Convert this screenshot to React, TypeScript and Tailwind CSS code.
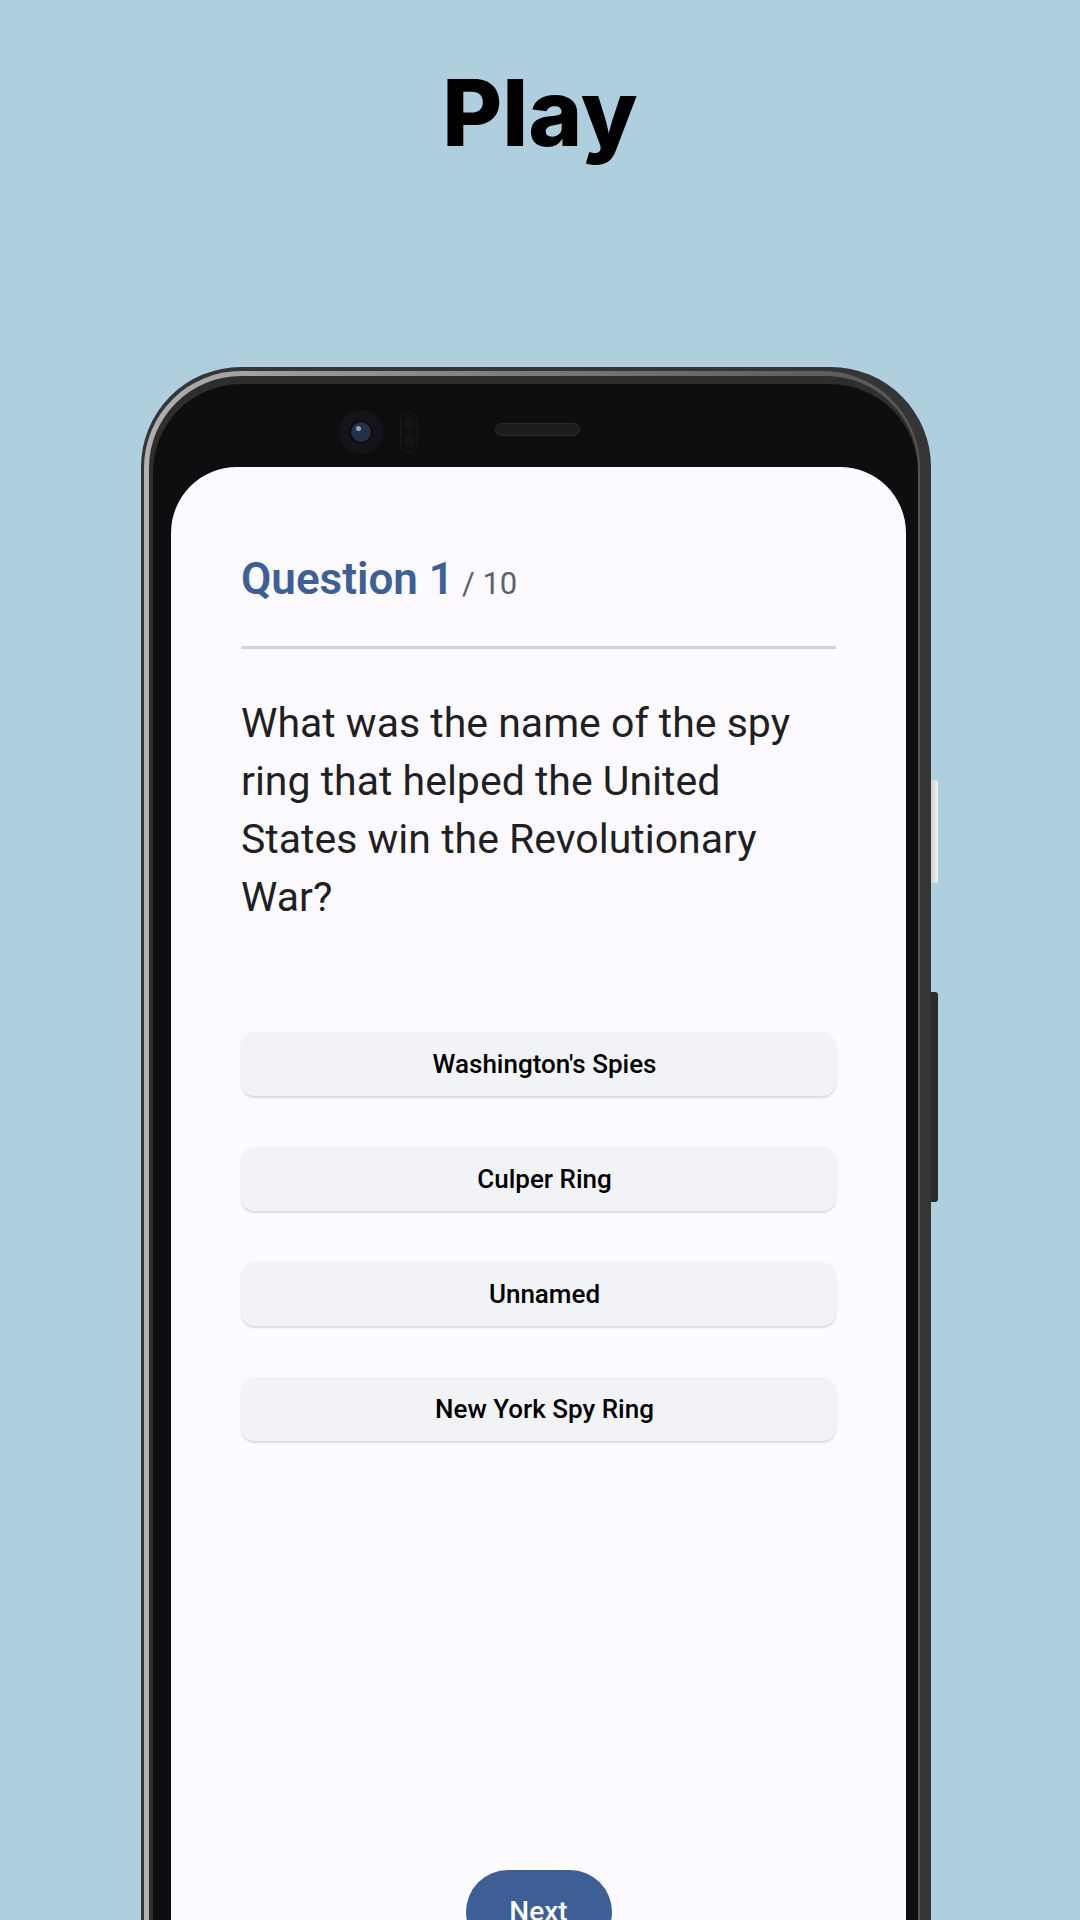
const answers = ["Washington's Spies", 'Culper Ring', 'Unnamed', 'New York Spy Ring'];

const PhoneTopBar = () => {
  return (
    <div className="flex h-[83px] items-start">
      <div className="ml-[168px] mt-[26px] flex h-[44px] w-[44px] items-center justify-center rounded-full bg-[#151518]">
        <div className="relative h-[20px] w-[20px] rounded-full bg-[#23304a] ring-2 ring-[#0c0c10]">
          <div className="absolute left-[5px] top-[4px] h-[5px] w-[5px] rounded-full bg-[#9aa3b5]" />
        </div>
      </div>
      <div className="ml-[17px] mt-[28px] flex h-[41px] w-[18px] flex-col items-center justify-around rounded-full border border-[#1c1c1f] bg-[#0f0f12] py-[2px]">
        <div className="h-[11px] w-[11px] rounded-full bg-[#151518]" />
        <div className="h-[11px] w-[11px] rounded-full bg-[#151518]" />
      </div>
      <div className="ml-[77px] mt-[39px] h-[13px] w-[85px] rounded-full border border-[#2c2c30] bg-[#1d1d20]" />
    </div>
  );
};

const QuizScreen = () => {
  return (
    <div className="min-h-[1500px] rounded-t-[66px] bg-[#fcfaff] px-[70px] pt-[90px] font-['Roboto',sans-serif]">
      <div className="flex items-baseline leading-none">
        <span className="text-[44px] font-semibold text-[#3d5f96]">Question 1</span>
        <span className="ml-[8px] text-[31px] text-[#5c6070]">/ 10</span>
      </div>
      <div className="mt-[45px] h-[3px] w-full bg-[#d2d2d9]" />

      <p className="mt-[45px] text-[41px] leading-[58px] text-[#1f1f24]">
        What was the name of the spy ring that helped the United States win the Revolutionary War?
      </p>

      <div className="mt-[106px] flex flex-col gap-[51px]">
        {answers.map((a) => (
          <button
            key={a}
            className="flex h-[64px] w-full items-center justify-center rounded-[14px] bg-[#f2f3f7] pl-[12px] text-[26px] font-medium text-black shadow-[0_2px_2px_rgba(0,0,0,0.13)]"
          >
            {a}
          </button>
        ))}
      </div>

      <div className="mt-[429px] flex justify-center">
        <button className="flex h-[84px] w-[146px] items-center justify-center rounded-full bg-[#3d5f96] text-[28px] font-medium text-white">
          Next
        </button>
      </div>
    </div>
  );
};

const App = () => {
  return (
    <div className="flex h-[1920px] w-[1080px] flex-col overflow-hidden bg-[#afcfdf]">
      <h1 className="pt-[67px] text-center font-['Inter',sans-serif] text-[92px] font-extrabold leading-none text-black">
        Play
      </h1>

      <div className="relative ml-[141px] mt-[208px] w-[790px]">
        {/* side buttons */}
        <div className="absolute left-[790px] top-[413px] h-[103px] w-[7px] rounded-r-[3px] bg-gradient-to-r from-[#cfcfcf] to-[#f2f2f2]" />
        <div className="absolute left-[790px] top-[625px] h-[210px] w-[7px] rounded-r-[3px] bg-[#2b2b2b]" />

        <div className="rounded-t-[100px] bg-[#353535] pl-[3px] pr-[11px] pt-[4px]">
          <div className="rounded-t-[97px] bg-gradient-to-r from-[#b0b0b0] via-[#7a7a7a] to-[#555555] pl-[5px] pr-[2px] pt-[5px]">
            <div className="rounded-t-[92px] bg-[#2e2e2e] pl-[4px] pt-[8px]">
              <div className="rounded-t-[88px] bg-[#0e0e10] pl-[18px] pr-[12px]">
                <PhoneTopBar />
                <QuizScreen />
              </div>
            </div>
          </div>
        </div>
      </div>
    </div>
  );
};

export default App;
